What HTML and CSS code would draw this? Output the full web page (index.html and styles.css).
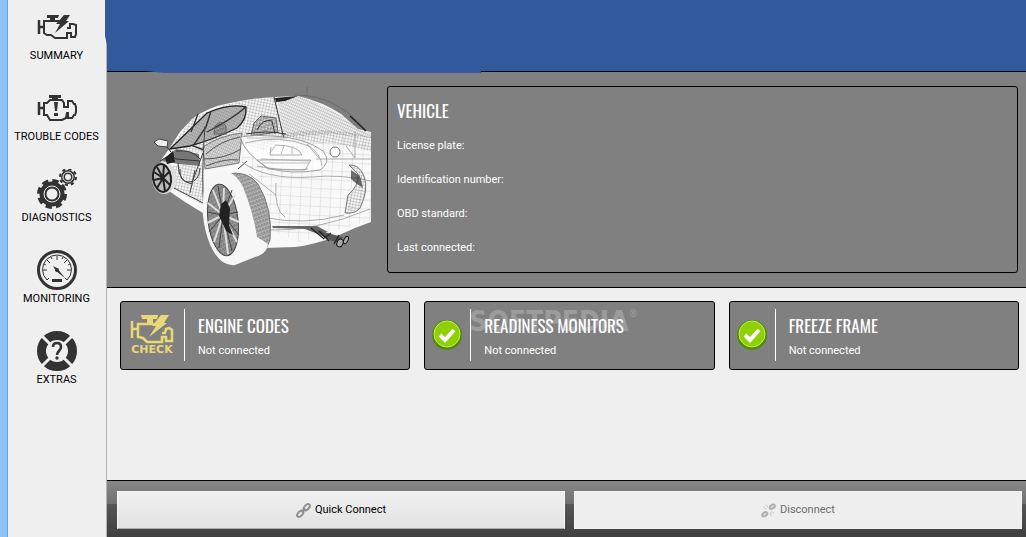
FILE: index.html
```html
<!DOCTYPE html>
<html lang="en">
<head>
<meta charset="utf-8">
<meta name="viewport" content="width=device-width, initial-scale=1">
<title>Vehicle summary</title>
<link rel="stylesheet" href="styles.css">
</head>
<body>
<div class="app">
  <nav class="sidebar" aria-label="Main">
    <button class="nav-item" type="button">
      <svg class="nav-icon" viewBox="0 0 40 40" aria-hidden="true">
        <path d="M2 13v14M2 20h5" class="thick"/>
        <path d="M10 8h12l-1 3h-3v4h-5v-4h-3z" fill="#333"/>
        <path d="M22 14H7v12l3 2 4 0 4 3h12v-5h4v4h4l1-3v-9l-3-1h-3v4h-3" class="line"/>
        <path d="M27 8h6l-4 6h3L18 26l5-9h-4z" fill="#333"/>
      </svg>
      <span>SUMMARY</span>
    </button>
    <button class="nav-item" type="button">
      <svg class="nav-icon" viewBox="0 0 40 40" aria-hidden="true">
        <path d="M2 14v13M2 20h5" class="thick"/>
        <path d="M12 7h12v3h-3v3h-6v-3h-3z" fill="#333"/>
        <path d="M7 15h3l3-3h12l2 3v4h4v-6h4l2 3h1l1 3v5l-1 3h-1l-2 3h-4v-5h-1l-1 5-4 2H13l-3-5H7z" class="line"/>
        <path d="M17 14h4l-1 9h-2zM17 25h4v3h-4z" fill="#333"/>
      </svg>
      <span>TROUBLE CODES</span>
    </button>
    <button class="nav-item" type="button">
      <svg class="nav-icon" viewBox="0 0 40 40" aria-hidden="true">
        <g fill="none" stroke="#333">
          <circle cx="15" cy="25" r="9" stroke-width="7"/>
          <circle cx="15" cy="25" r="13" stroke-width="4" stroke-dasharray="6.200 4"/>
          <circle cx="15" cy="25" r="8" stroke="#efefef" stroke-width="1"/>
          <circle cx="31" cy="8" r="5" stroke-width="4"/>
          <circle cx="31" cy="8" r="8" stroke-width="2" stroke-dasharray="3.300 2.980"/>
          <circle cx="31" cy="8" r="5" stroke="#efefef" stroke-width="1"/>
        </g>
      </svg>
      <span>DIAGNOSTICS</span>
    </button>
    <button class="nav-item" type="button">
      <svg class="nav-icon" viewBox="0 0 40 40" aria-hidden="true">
        <circle cx="20" cy="20" r="18.500" fill="none" stroke="#333" stroke-width="3"/>
        <path d="M10 30a14.500 14.500 0 1 1 20 0M20 6v4M6 20h4M34 20h-4M10 10l3 3M30 10l-3 3M10 30l2-2M30 30l-2-2M14 7l1 2M26 7l-1 2M7 14l2 1M33 14l-2 1" fill="none" stroke="#333"/>
        <circle cx="20" cy="20" r="2" fill="#333"/>
        <path d="M16 16l4 2 8 10-9-7zM15 29h10v3H15z" fill="#333"/>
      </svg>
      <span>MONITORING</span>
    </button>
    <button class="nav-item" type="button">
      <svg class="nav-icon" viewBox="0 0 40 40" aria-hidden="true">
        <circle cx="20" cy="20" r="15.500" fill="none" stroke="#333" stroke-width="9"/>
        <path d="M4 4l10 10M36 4L26 14M4 36l10-10M36 36L26 26" stroke="#efefef" stroke-width="3"/>
        <path d="M16 16q0-4 4-4t4 4q0 2-2 4t-2 4" fill="none" stroke="#333" stroke-width="2.600"/>
        <circle cx="20" cy="27" r="1.700" fill="#333"/>
      </svg>
      <span>EXTRAS</span>
    </button>
  </nav>

  <main class="main">
    <header class="banner">
      <svg class="banner-edge" viewBox="0 0 376 73" aria-hidden="true">
        <path d="M0 0H376V73H60L40 71H2V45L0 36z" fill="#31599c"/>
      </svg>
    </header>

    <section class="hero">
      <svg class="car" viewBox="140 80 235 200" role="img" aria-label="Wireframe drawing of a car">
        <defs>
          <pattern id="mesh" width="3" height="3" patternUnits="userSpaceOnUse" patternTransform="rotate(12)">
            <path d="M0 0H3M0 0V3" stroke="#777" stroke-width=".6" fill="none"/>
          </pattern>
          <pattern id="fine" width="2" height="3" patternUnits="userSpaceOnUse" patternTransform="rotate(24)">
            <path d="M0 0H2M0 0V3" stroke="#666" stroke-width=".5" fill="none"/>
          </pattern>
          <pattern id="grid" width="10" height="9" patternUnits="userSpaceOnUse" patternTransform="rotate(3)">
            <path d="M0 0H10M0 0V9" stroke="#aaa" stroke-width=".5" fill="none"/>
          </pattern>
          <pattern id="tread" width="3" height="4" patternUnits="userSpaceOnUse" patternTransform="rotate(-20)">
            <path d="M0 1H3M1 0V4M2 2l1 1" stroke="#444" stroke-width=".5" fill="none"/>
          </pattern>
        </defs>
        <path d="M169 149L180 132 192 119Q208 107 230 103 251 98 275 97L298 96Q323 102 341 114L358 129 371 132V222L355 228 337 236Q314 245 295 247L264 248 218 235 203 213 185 202 169 191 161 160z" fill="#f8f8f8"/>
        <path d="M192 119Q230 98 276 97L284 136 264 150 243 144 200 153 169 149z" fill="url(#mesh)"/>
        <path d="M277 98L299 96Q335 108 358 129L371 133V138L330 134 284 137z" fill="url(#fine)"/>
        <path d="M264 138Q310 130 371 140V220L300 242 270 230 263 182 240 160z" fill="url(#grid)"/>
        <path d="M284 133Q330 126 371 137V152Q328 138 262 143z" fill="url(#mesh)"/>
        <path d="M170 149L207 113Q230 103 246 107 247 120 237 128 212 140 190 146z" fill="#bbb"/>
        <path d="M170 149L207 113Q230 103 246 107 247 120 237 128 212 140 190 146z" fill="url(#fine)" stroke="#222" stroke-width="1.300"/>
        <path d="M211 111L206 127 193 146 204 150M191 132l7-18M207 132Q232 119 246 107" fill="none" stroke="#333" stroke-width="1.400"/>
        <path d="M166 157L176 149 199 154 200 166 179 164 161 161z" fill="#777"/>
        <path d="M160 161l10-6 6 4 24 2M176 151q16-2 24 8M178 163q0 20 15 21M193 180l10-27M180 169q-1 13 9 13t11-14" fill="none" stroke="#333"/>
        <path d="M170 166L204 163 203 205 170 187z" fill="url(#mesh)"/>
        <path d="M203 147Q218 136 242 133L239 163 205 169z" fill="#ddd"/>
        <path d="M203 147Q218 136 242 133L239 163 205 169z" fill="url(#fine)" stroke="#777"/>
        <path d="M204 159q21 0 37-10M206 154q14-13 34-17M206 166q20-8 32-6" fill="none" stroke="#555"/>
        <path d="M205 126Q201 176 204 212M174 188l31 16M238 169l9-8M190 193l5-23" fill="none" stroke="#444"/>
        <path d="M215 126q6-7 11 0v8h-12zM254 123l7-7 15 2 2 14-27 4z" fill="url(#tread)" stroke="#666"/>
        <path d="M257 130q6-12 15-9l3 13M246 134q20-4 40 0M247 138h40M274 97l10 42" fill="none" stroke="#333"/>
        <path d="M275 98l23-2-13 5-9 1z" fill="#222"/>
        <path d="M295 95Q318 95 336 105T366 131M307 87v8" fill="none" stroke="#555" stroke-width=".5"/>
        <path d="M350 116l16 15" fill="none" stroke="#222" stroke-width="1.500"/>
        <path d="M240 137Q245 154 268 168 290 175 320 170 332 162 323 151 304 137 271 136 255 134 240 137z" fill="#fff" fill-opacity=".7" stroke="#888" stroke-width=".8"/>
        <path d="M245 143Q280 134 309 146 321 154 322 166M257 160h54l-6 10-37-1zM275 145q23 0 27 10h-32l1-8M307 144l12 14M257 166q29 6 51 3" fill="none" stroke="#999" stroke-width=".8"/>
        <path d="M262 163h47M261 159l49 2M270 153l5-7M281 154l3-8M292 154v-7" stroke="#aaa" stroke-width=".8" fill="none"/>
        <circle cx="335" cy="152" r="5" fill="#fff" stroke="#777"/>
        <path d="M242 162Q266 180 311 177 341 174 371 181M249 174l27 21M276 183q-2 27 9 34M262 217q42 9 82-2M268 230q47 2 102-21M316 159h55M355 131v27l-9-12" fill="none" stroke="#999" stroke-width=".8"/>
        <path d="M349 165q10-1 15 11 5 14-4 32-4 6-15 5l3-18q11-9 10-21z" fill="url(#mesh)" stroke="#777"/>
        <path d="M351 170l9 6 3 12-6-4-6-5z" fill="#333" fill-opacity=".7"/>
        <path d="M272 226l45 0 11 6-10 2-13-5-32-1z" fill="#666"/>
        <path d="M317 230l14 4 12 3-2 6-12-3-10-6z" fill="#555"/>
        <path d="M319 231l10 10M331 233l-8 6M311 228l12 10M339 235l-5 9" stroke="#222" stroke-width="1.300"/>
        <ellipse cx="340" cy="243" rx="3" ry="4" fill="#aaa" stroke="#111" transform="rotate(25 340 243)"/>
        <ellipse cx="346" cy="240" rx="2" ry="4" fill="#aaa" stroke="#111" transform="rotate(25 346 240)"/>
        <path d="M227 174Q247 170 258 184 273 209 270 240L264 254 246 253z" fill="#ccc"/>
        <path d="M227 174Q247 170 258 184 273 209 270 240L264 254 246 253z" fill="url(#tread)" stroke="#777"/>
        <path d="M213 174Q231 164 243 187 254 215 257 237L268 244Q267 254 255 257L235 265Q218 267 208 239 199 212 205 186 208 177 213 174z" fill="#f6f6f6"/>
        <ellipse cx="223" cy="220" rx="15" ry="36" fill="#aaa" stroke="#444" transform="rotate(-7 223 220)"/>
        <ellipse cx="223" cy="220" rx="15" ry="36" fill="url(#tread)" transform="rotate(-7 223 220)"/>
        <path d="M223 215L213 190M223 215L224 188M223 215L235 195M223 215L239 222M223 215L237 242M223 215L228 254M223 215L214 242M223 215L207 223M223 215L208 203" stroke="#ddd" stroke-width="2"/>
        <path d="M223 215L218 186M223 215L232 190M223 215L238 212M223 215L239 235M223 215L232 251M223 215L219 248M223 215L209 232M223 215L207 212" stroke="#444"/>
        <path d="M221 204l5-4 4 8-1 17 4 10-7-4-4-9-3-6z" fill="#222"/>
        <ellipse cx="164" cy="178" rx="12" ry="16" fill="#ddd"/>
        <ellipse cx="162" cy="178" rx="9" ry="14" fill="#bbb" stroke="#222" stroke-width="2" transform="rotate(-8 162 178)"/>
        <path d="M163 178l-6-11M163 178l1-13M163 178l7-7M163 178l7 7M163 178l2 13M163 178l-6 10M163 178l-9 2M163 178l-9-6" stroke="#222" stroke-width="2"/>
        <path d="M165 158l8-7 2 11-8 2z" fill="#222"/>
        <path d="M154 142l5-3 9 2-1 6-9-1z" fill="#eee" stroke="#444"/>
        <path d="M167 147l4 5" stroke="#333"/>
      </svg>
      <div class="vehicle">
        <h2 class="title">VEHICLE</h2>
        <dl class="facts">
          <dt>License plate:</dt><dd></dd>
          <dt>Identification number:</dt><dd></dd>
          <dt>OBD standard:</dt><dd></dd>
          <dt>Last connected:</dt><dd></dd>
        </dl>
      </div>
    </section>

    <section class="cards">
      <article class="card card-wide-icon">
        <div class="card-icon">
          <svg class="check-engine" viewBox="0 0 44 42" aria-hidden="true">
            <g fill="none" stroke="#e8d87a" stroke-width="2.500">
              <path d="M2 7v17M2 15h5M24 10H8v13l5 1 4 4h15v-5h4v4h6V16l-3-2-3 1-1 4h-3"/>
            </g>
            <path d="M11 1h17l-1 4h-4v4h-6V5h-5zM31 1h8l-5 8h3L19 23l7-11h-4z" fill="#e8d87a"/>
            <text class="check-text" x="22" y="39" text-anchor="middle">CHECK</text>
          </svg>
        </div>
        <div class="card-body">
          <h2 class="title">ENGINE CODES</h2>
          <p>Not connected</p>
        </div>
      </article>
      <article class="card">
        <span class="watermark" aria-hidden="true">SOFTPEDIA<sup>®</sup></span>
        <div class="card-icon">
          <svg class="tick" viewBox="0 0 32 32" aria-hidden="true">
            <circle cx="16" cy="16" r="15" fill="#4f8a0a"/>
            <circle cx="16" cy="15" r="13" fill="#8fd003" stroke="#c3ec62"/>
            <path d="M9 16l5 5 9-10" fill="none" stroke="#fff" stroke-width="4"/>
          </svg>
        </div>
        <div class="card-body">
          <h2 class="title">READINESS MONITORS</h2>
          <p>Not connected</p>
        </div>
      </article>
      <article class="card">
        <div class="card-icon">
          <svg class="tick" viewBox="0 0 32 32" aria-hidden="true">
            <circle cx="16" cy="16" r="15" fill="#4f8a0a"/>
            <circle cx="16" cy="15" r="13" fill="#8fd003" stroke="#c3ec62"/>
            <path d="M9 16l5 5 9-10" fill="none" stroke="#fff" stroke-width="4"/>
          </svg>
        </div>
        <div class="card-body">
          <h2 class="title">FREEZE FRAME</h2>
          <p>Not connected</p>
        </div>
      </article>
    </section>

    <footer class="actions">
      <button class="action" type="button">
        <svg class="link-icon" viewBox="0 0 16 16" aria-hidden="true">
          <g fill="none" stroke="#8c8c8c" stroke-width="2">
            <ellipse cx="4.500" cy="11.500" rx="4" ry="2.300" transform="rotate(-45 4.500 11.500)"/>
            <ellipse cx="11.500" cy="4.500" rx="4" ry="2.300" transform="rotate(-45 11.500 4.500)"/>
            <path d="M6 10l4-4"/>
          </g>
        </svg>
        Quick Connect
      </button>
      <button class="action" type="button" disabled>
        <svg class="link-icon" viewBox="0 0 16 16" aria-hidden="true">
          <g fill="#d8d8d8" stroke="#b0b0b0" stroke-width="2">
            <ellipse cx="4" cy="12" rx="3" ry="2" transform="rotate(-35 4 12)"/>
            <ellipse cx="12" cy="4" rx="3" ry="2" transform="rotate(-35 12 4)"/>
          </g>
          <path d="M2 4l4 3M6 2l1 3M10 10l1 4M11 9l3 2" stroke="#c4c4c4"/>
        </svg>
        Disconnect
      </button>
    </footer>
  </main>
</div>
</body>
</html>
```
FILE: styles.css
```css
* {
  box-sizing: border-box;
}

body {
  margin: 0;
  background: #efefef;
  font-family: Tahoma, Roboto, sans-serif;
  font-size: 11px;
  line-height: 16px;
}

h2, p, dl, dd {
  margin: 0;
}

button {
  font: inherit;
  color: #000;
}

.app {
  display: flex;
  min-height: 100vh;
}

.sidebar {
  flex: none;
  width: 107px;
  display: flex;
  flex-direction: column;
  gap: 24px;
  padding-top: 7px;
  border-left: 7px solid #8cc3f7;
  border-right: 1px solid #b4b4b4;
  box-shadow: inset 1px 0 #6f9fcb;
}

.nav-item {
  display: flex;
  flex-direction: column;
  align-items: center;
  gap: 1px;
  padding: 0;
  border: 0;
  background: none;
  font-family: Roboto, sans-serif;
  white-space: nowrap;
}

.nav-icon {
  width: 40px;
  height: 40px;
}

.line {
  fill: none;
  stroke: #333;
  stroke-width: 2;
}

.thick {
  fill: none;
  stroke: #333;
  stroke-width: 2.5;
}

.main {
  flex: 1;
  min-width: 0;
  display: flex;
  flex-direction: column;
}

.banner {
  position: relative;
  height: 72px;
  background: #31599c;
  border-bottom: 1px solid #000;
}

.banner-edge {
  position: absolute;
  left: -2px;
  top: 0;
  width: 376px;
  height: 73px;
}

.hero {
  display: flex;
  align-items: flex-start;
  padding: 8px 8px 7px 33px;
  background: #808080;
  border-bottom: 1px solid #000;
}

.car {
  flex: none;
  width: 235px;
  height: 200px;
}

.vehicle {
  flex: 1;
  margin: 6px 0 0 12px;
  padding: 14px 9px 16px;
  border: 1px solid #000;
  border-radius: 3px;
  color: #fff;
}

.title {
  font-family: Oswald, "Liberation Sans Narrow", "Roboto Condensed", "Open Sans Condensed", "DejaVu Sans Condensed", sans-serif;
  font-size: 17px;
  font-weight: 400;
  line-height: 20px;
  white-space: nowrap;
}

.facts {
  display: grid;
  grid-template-columns: auto 1fr;
  gap: 18px 12px;
  padding-top: 17px;
}

.cards {
  display: grid;
  grid-template-columns: repeat(3, 1fr);
  gap: 14px;
  padding: 13px 7px 13px 13px;
}

.card {
  position: relative;
  display: flex;
  padding: 7px 0 8px;
  background: #808080;
  border: 1px solid #000;
  border-radius: 3px;
  color: #fff;
}

.card-icon {
  flex: none;
  width: 46px;
  display: grid;
  place-items: center;
  padding-right: 1px;
  border-right: 1px solid #fff;
}

.card-wide-icon .card-icon {
  width: 64px;
}

.card-body {
  position: relative;
  padding: 7px 0 2px 13px;
}

.card-body p {
  padding-top: 7px;
}

.check-engine {
  width: 44px;
  height: 42px;
}

.check-text {
  font-family: "DejaVu Sans", sans-serif;
  font-size: 11px;
  font-weight: 700;
  fill: #e8d87a;
}

.tick {
  width: 32px;
  height: 32px;
}

.watermark {
  position: absolute;
  left: 44px;
  top: 4px;
  font-family: "DejaVu Sans Condensed", "DejaVu Sans", sans-serif;
  font-size: 28px;
  font-weight: 700;
  line-height: 32px;
  color: #9c9c9c;
}

.watermark sup {
  font-size: 10px;
  line-height: 0;
  vertical-align: 14px;
}

.actions {
  display: grid;
  grid-template-columns: 1fr 1fr;
  gap: 9px;
  margin-top: auto;
  padding: 10px 4px 8px 10px;
  border-top: 1px solid #000;
  background: linear-gradient(#888 0%, #707070 41%, #555 42%, #404040 100%);
}

.action {
  display: flex;
  align-items: center;
  justify-content: center;
  gap: 4px;
  height: 38px;
  border: 1px solid #f8f8f8;
  border-bottom-color: #aaa;
  background: linear-gradient(#f0f0f0, #e2e2e2);
}

.action:disabled {
  border-color: #f4f4f4;
  background: #eee;
  color: #6d6d6d;
}

.link-icon {
  width: 15px;
  height: 15px;
}
```
